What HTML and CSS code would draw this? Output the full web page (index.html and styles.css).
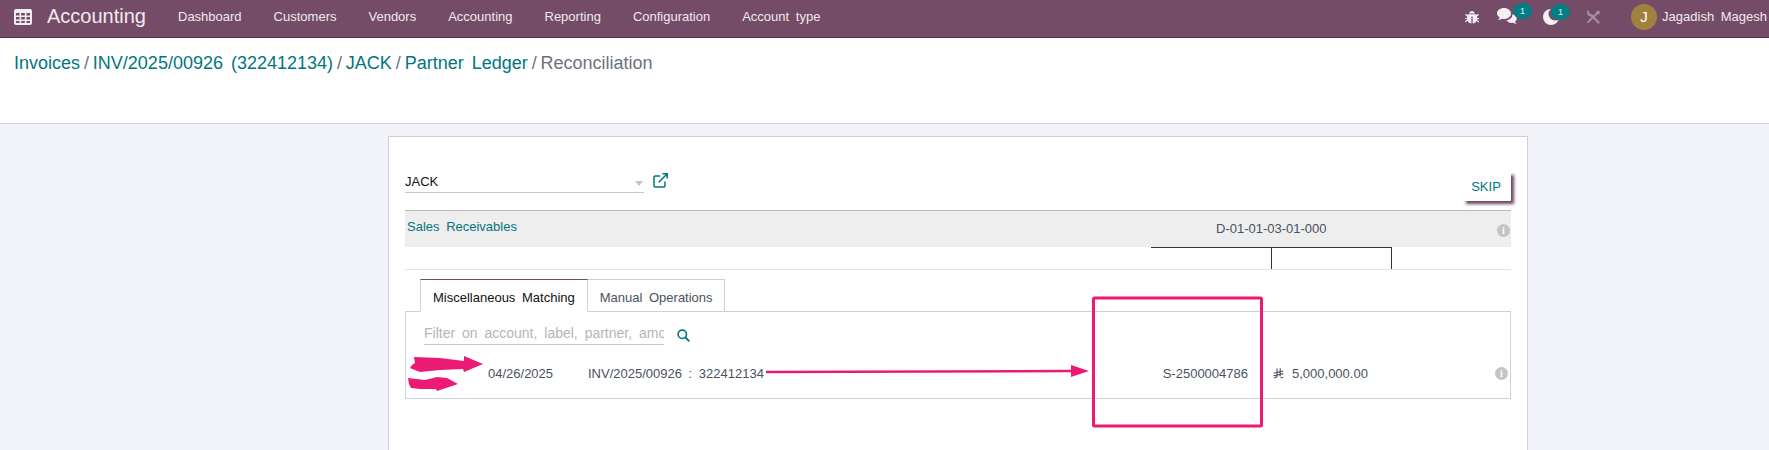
FILE: index.html
```html
<!DOCTYPE html>
<html lang="en">
<head>
<meta charset="utf-8">
<title>Reconciliation</title>
<link rel="stylesheet" href="styles.css">
</head>
<body>
<header class="navbar">
  <svg class="apps" viewBox="0 0 18 16" width="18" height="16"><path fill="#f1ecf0" fill-rule="evenodd" d="M2 0h14a2 2 0 0 1 2 2v12a2 2 0 0 1-2 2H2a2 2 0 0 1-2-2V2a2 2 0 0 1 2-2zM2 4v2.500h3.500V4zM7.200 4v2.500h3.600V4zM12.500 4v2.500H16V4zM2 8v2.500h3.500V8zM7.200 8v2.500h3.600V8zM12.500 8v2.500H16V8zM2 12v2h3.500v-2zM7.200 12v2h3.600v-2zM12.500 12v2H16v-2z"/></svg>
  <span class="brand">Accounting</span>
  <nav class="menu">
    <span>Dashboard</span><span>Customers</span><span>Vendors</span><span>Accounting</span><span>Reporting</span><span>Configuration</span><span>Account type</span>
  </nav>
  <div class="systray">
    <svg class="ico-bug" viewBox="0 0 14 14" width="14" height="14"><path fill="#f4eff3" d="M4.200 3.400C4.400 1.800 5.500.9 7 .9s2.600.9 2.800 2.500zM3.500 4.300h7c.6 0 1 .3 1.200.8l1.500-1.300.8.9-2 1.800v1.600h2.300v1.200h-2.300v.4l2.200 2-.8.9-1.800-1.600C10.800 12.300 9.500 13.300 7.600 13.400V6.500H6.400v6.900c-1.900-.1-3.200-1.100-3.900-2.700l-1.800 1.600-.8-.9 2.200-2v-.4H-.2V8.300h2.300V6.500l-2-1.800.8-.9 1.500 1.300c.2-.5.600-.8 1-.8z"/></svg>
    <div class="tray-item tray-chat">
      <svg viewBox="0 0 21 17" width="21" height="17"><path fill="#f4eff3" d="M7 0c3.900 0 7 2.400 7 5.500S10.900 11 7 11c-.8 0-1.600-.1-2.300-.3-.9.8-2.200 1.200-3.500 1.200.8-.8 1.300-1.700 1.400-2.600C1 8.300 0 7 0 5.500 0 2.400 3.100 0 7 0z"/><path fill="#f4eff3" d="M15.300 6.300c2.500.5 4.400 2.100 4.400 4.200 0 1.200-.6 2.300-1.600 3 .2.900.8 1.800 1.600 2.500-1.300 0-2.500-.5-3.400-1.200-.5.1-1 .1-1.500.1-2.400 0-4.500-1-5.300-2.600 3.600-.3 6.300-2.900 5.800-6z"/></svg>
      <b class="badge">1</b>
    </div>
    <div class="tray-item tray-activity">
      <svg viewBox="0 0 16 16" width="16" height="16"><circle cx="8" cy="8" r="8" fill="#f4eff3"/><circle cx="12" cy="5" r="6.500" fill="#744c67"/></svg>
      <b class="badge">1</b>
    </div>
    <svg class="ico-tools" viewBox="0 0 14 14" width="14" height="14"><g fill="none" stroke="#a48ea0" stroke-linecap="round"><path stroke-width="2.400" d="M5.500 5.500l7 7"/><path stroke-width="2.200" d="M2 1.600A3 3 0 0 0 5.600 5.200"/><path stroke-width="2" d="M11.300 3L2.200 12"/><path stroke-width="3.200" d="M11.800 2.200l.5.500"/></g></svg>
    <div class="user"><span class="avatar">J</span><span>Jagadish Magesh</span></div>
  </div>
</header>

<section class="control-panel">
  <ol class="crumbs">
    <li><a>Invoices</a></li><li><a>INV/2025/00926 (322412134)</a></li><li><a>JACK</a></li><li><a>Partner Ledger</a></li><li class="current">Reconciliation</li>
  </ol>
</section>

<main class="content">
  <article class="sheet">
    <div class="top-row">
      <div class="partner"><span>JACK</span><i class="caret"></i></div>
      <svg class="ext" viewBox="0 0 15 15" width="15" height="15"><path fill="none" stroke="#017680" stroke-width="1.500" d="M7 3H2.200C1.500 3 1 3.500 1 4.200v8.600c0 .7.500 1.200 1.200 1.200h8.600c.7 0 1.200-.5 1.200-1.200V8.500M5.800 9.200L14 1M9.500.8H14.200V5.500"/></svg>
      <button class="skip">SKIP</button>
    </div>
    <div class="account-row">
      <a class="acct-name">Sales Receivables</a>
      <span class="acct-code">D-01-01-03-01-000</span>
      <i class="info info-head">i</i>
    </div>
    <div class="ruled">
      <div class="cell cell-a"></div>
      <div class="cell cell-b"></div>
      <div class="cell cell-c"></div>
    </div>
    <div class="tabs">
      <span class="tab active">Miscellaneous Matching</span>
      <span class="tab tab-manual">Manual Operations</span>
    </div>
    <div class="panel">
      <div class="search">
        <span class="filter">Filter on account, label, partner, amount and reference</span>
        <svg viewBox="0 0 13 13" width="13" height="13"><circle cx="5.300" cy="5.300" r="4.200" fill="none" stroke="#017680" stroke-width="1.600"/><path stroke="#017680" stroke-width="1.800" stroke-linecap="round" d="M8.500 8.500l3.300 3.300"/></svg>
      </div>
      <div class="line">
        <span class="date">04/26/2025</span>
        <span class="ref">INV/2025/00926 : 322412134</span>
        <span class="so">S-2500004786</span>
        <svg class="riyal" viewBox="0 0 11 11" width="11" height="11"><path fill="none" stroke="#4a5260" stroke-width="1.100" d="M4 .5v8.300L.8 10M7.200.2v8.300M.5 5.200l9.800-2.200M.5 7.800l9.800-2.200M7.500 10l2.800-.7"/></svg>
        <span class="amount">5,000,000.00</span>
        <i class="info info-line">i</i>
      </div>
    </div>
  </article>
</main>

<svg class="markup" viewBox="0 0 1769 450" width="1769" height="450">
  <rect x="1093.500" y="298" width="168" height="128" rx="1" fill="none" stroke="#ec1a72" stroke-width="3"/>
  <path fill="none" stroke="#ec1a72" stroke-width="2.500" d="M766 372L1072 371"/>
  <path fill="#ec1a72" d="M1071 365L1089 371L1071 377z"/>
  <path fill="#ec1a72" d="M414 357L440 358L464 361L464 356L483 364L464 372L463 369L440 370L420 372L410 368L412 365L415 363z"/>
  <path fill="#ec1a72" d="M408 378L425 380L437 377L447 378L458 384L437 391L436 389L420 389L411 388L409 384z"/>
</svg>
</body>
</html>
```

FILE: styles.css
```css
* { box-sizing: border-box; }
html, body { margin: 0; padding: 0; height: 450px; overflow: hidden; }
body {
  position: relative;
  font-family: "Liberation Sans", Arial, sans-serif;
  font-size: 13px;
  color: #4a5260;
  background: #f3f4f9;
  word-spacing: 3px;
}

.navbar {
  display: flex;
  align-items: center;
  height: 38px;
  padding: 0 2px 4px 14px;
  background: #744c67;
  border-bottom: 1px solid #4e3547;
  color: #f0e9ee;
}
.apps { flex: none; }
.brand { margin-left: 15px; font-size: 20px; width: 99px; white-space: nowrap; }
.menu { display: flex; gap: 32px; margin-left: 32px; }
.menu span { white-space: nowrap; }
.systray { display: flex; align-items: center; margin-left: auto; }
.ico-bug { margin-right: 18px; }
.tray-item { position: relative; display: flex; }
.tray-chat { margin-right: 25px; }
.tray-activity { margin-right: 27px; }
.ico-tools { margin-right: 31px; }
.badge {
  position: absolute;
  top: -5px;
  right: -13px;
  width: 19px;
  height: 16px;
  border-radius: 50%;
  background: #017e84;
  color: #e8f3f3;
  font-size: 9px;
  font-weight: 400;
  line-height: 16px;
  text-align: center;
}
.tray-chat .badge { right: -14px; }
.tray-activity .badge { right: -11px; }
.user { display: flex; align-items: center; gap: 5px; white-space: nowrap; }
.avatar {
  width: 26px;
  height: 26px;
  border-radius: 50%;
  background: #a2803e;
  color: #fff;
  font-size: 15px;
  text-align: center;
  line-height: 26px;
}

.control-panel {
  height: 86px;
  padding: 15px 14px 0;
  background: #fff;
  border-bottom: 1px solid #cfd1d9;
}
.crumbs {
  display: flex;
  margin: 0;
  padding: 0;
  list-style: none;
  font-size: 18px;
  line-height: 21px;
  color: #017680;
}
.crumbs li + li::before { content: "/"; margin: 0 3.900px; color: #6c7280; word-spacing: 0; }
.crumbs .current { color: #6c7280; }

.content { padding: 12px 0 0 388px; }
.sheet {
  width: 1140px;
  height: 320px;
  padding: 0 16px;
  background: #fff;
  border: 1px solid #cdd0d8;
}
.top-row {
  position: relative;
  display: flex;
  align-items: flex-start;
  height: 73px;
  padding-top: 20px;
}
.partner {
  display: flex;
  justify-content: space-between;
  align-items: center;
  width: 239px;
  height: 36px;
  padding-top: 14px;
  border-bottom: 1px solid #c8c8cc;
  color: #111;
}
.caret {
  width: 0;
  height: 0;
  margin-right: 1px;
  margin-top: 3px;
  border: 4px solid transparent;
  border-top: 5px solid #c4c4c8;
  border-bottom: 0;
}
.ext { margin: 16px 0 0 9px; }
.skip {
  margin: 13px 0 0 auto;
  width: 50px;
  height: 31px;
  padding: 2px 0 0;
  border: 0;
  background: #fff;
  color: #017680;
  font: inherit;
  box-shadow: 4px 4px 3px -1px #6b4560;
  word-spacing: 0;
}
.account-row {
  position: relative;
  display: flex;
  justify-content: flex-start;
  align-items: center;
  height: 37px;
  background: #eee;
  border-top: 1px solid #b9b9b9;
}
.acct-name { margin: 0 0 6px 2px; color: #017680; }
.acct-code { position: absolute; left: 811px; top: 10px; width: 111px; word-spacing: 0; }
.info {
  display: block;
  width: 13px;
  height: 13px;
  border-radius: 50%;
  background: #c4c4c6;
  color: #fff;
  font: bold 10px/13px "Liberation Serif", serif;
  text-align: center;
}
.info-head { margin-left: auto; margin-right: 1px; margin-top: 2px; }

.ruled {
  display: grid;
  grid-template-columns: 746px 121px 120px 1fr;
  height: 23px;
  border-bottom: 1px solid #e4e4e4;
}
.cell-a { grid-column: 2; border-top: 1px solid #333; border-right: 1px solid #333; }
.cell-b { grid-column: 3; border-top: 1px solid #333; border-right: 1px solid #333; }
.cell-c { grid-column: 4; }

.tabs { display: flex; height: 33px; margin: 9px 0 -1px 15px; position: relative; }
.tab {
  padding: 0 12px;
  border: 1px solid #cdd0d8;
  border-left: 0;
  line-height: 36px;
  white-space: nowrap;
}
.tab-manual { padding-right: 11px; }
.tab.active {
  border-left: 1px solid #cdd0d8;
  border-top-color: #714b67;
  border-bottom-color: #fff;
  color: #111;
  background: #fff;
}
.panel { height: 88px; border: 1px solid #cdd0d8; }
.search { display: flex; align-items: flex-start; padding: 11px 0 0 18px; }
.filter {
  width: 240px;
  height: 22px;
  overflow: hidden;
  white-space: nowrap;
  color: #b5b5b8;
  border-bottom: 1px solid #c8c8cc;
  font-size: 14px;
  line-height: 20px;
}
.search svg { margin: 6px 0 0 13px; }
.line { position: relative; display: flex; align-items: center; height: 30px; margin-top: 13px; padding-left: 82px; }
.date { width: 100px; word-spacing: 0; }
.ref { width: 240px; white-space: nowrap; }
.so { width: 420px; text-align: right; word-spacing: 0; }
.riyal { margin-left: 25px; }
.amount { margin-left: 8px; word-spacing: 0; }
.info-line { margin-left: auto; margin-right: 2px; }

.markup { position: absolute; left: 0; top: 0; pointer-events: none; }
```
